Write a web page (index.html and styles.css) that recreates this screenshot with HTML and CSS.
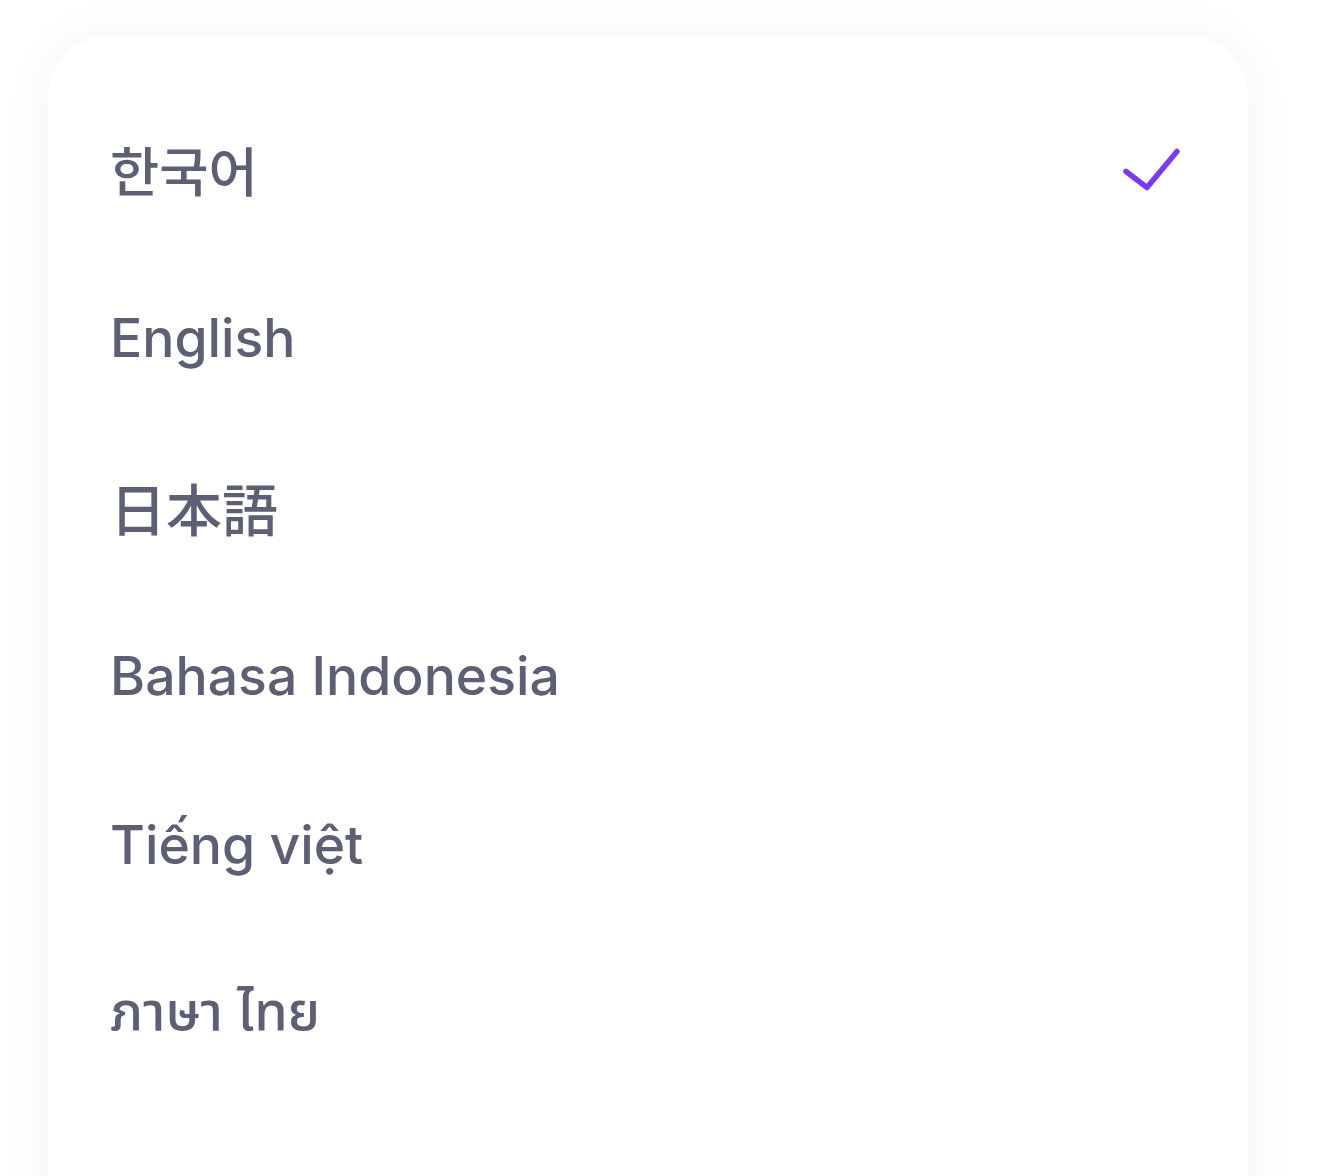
FILE: index.html
```html
<!DOCTYPE html>
<html lang="ko">
<head>
<meta charset="utf-8">
<link rel="stylesheet" href="styles.css">
</head>
<body>
<div class="card">
  <ul class="list">
    <li class="item"><span class="label" lang="ko">한국어</span>
      <svg class="check" width="64" height="52" viewBox="0 0 64 52"><path d="M8 28.5 L29 44.5 L59 8.5" fill="none" stroke="#7c3aed" stroke-width="5.5" stroke-linecap="round" stroke-linejoin="round"/></svg>
    </li>
    <li class="item"><span class="label" lang="en">English</span></li>
    <li class="item"><span class="label" lang="ja">日本語</span></li>
    <li class="item"><span class="label" lang="id">Bahasa Indonesia</span></li>
    <li class="item"><span class="label" lang="vi">Tiếng việt</span></li>
    <li class="item"><span class="label" lang="th">ภาษา ไทย</span></li>
  </ul>
</div>
</body>
</html>
```
FILE: styles.css
```css
html, body {
  margin: 0;
  padding: 0;
  background: #ffffff;
  overflow: hidden;
}
body {
  padding: 36px 72px 0 48px;
  height: 1176px;
  box-sizing: border-box;
}
.card {
  background: #ffffff;
  border-radius: 60px;
  box-shadow: 0 0 50px rgba(20, 20, 40, 0.05);
  height: 1300px;
  padding: 48px 66px 0 62px;
  box-sizing: border-box;
}
.list {
  list-style: none;
  margin: 0;
  padding: 0;
}
.item {
  height: 169px;
  display: flex;
  align-items: center;
  justify-content: space-between;
}
.label {
  font-family: "Inter", "Noto Sans", "Noto Sans Thai", "Noto Sans Thai UI", "Noto Sans CJK KR", sans-serif;
  font-size: 53.5px;
  font-weight: 500;
  color: #5d6075;
  line-height: 1;
}
.label:lang(ja) {
  font-family: "Noto Sans CJK JP", sans-serif;
  font-size: 56px;
}
.label:lang(ko) {
  font-family: "Noto Sans CJK KR", sans-serif;
}
.label:lang(th) {
  font-family: "Noto Sans Thai", "Noto Sans Thai UI", "Noto Sans", sans-serif;
  font-size: 54px;
}
.check {
  display: block;
}
```
